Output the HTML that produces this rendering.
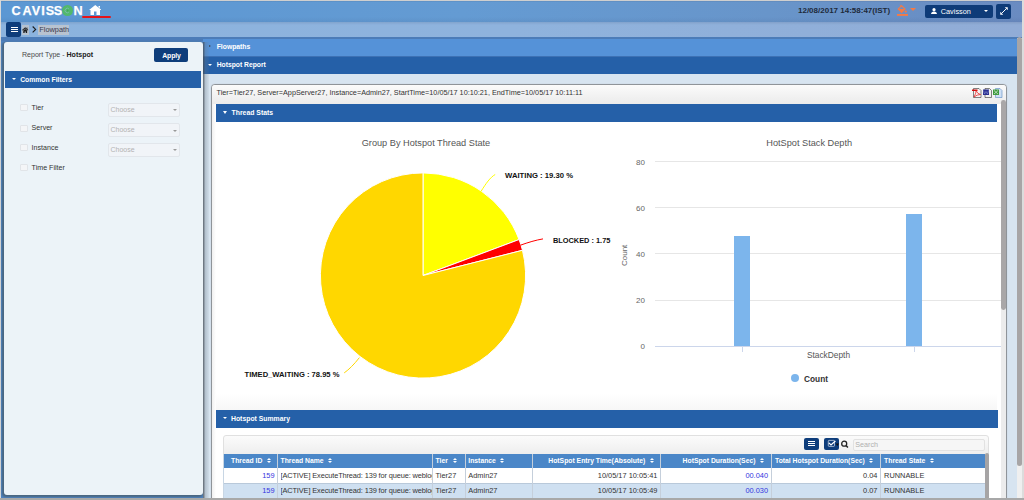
<!DOCTYPE html>
<html><head><meta charset="utf-8">
<style>
*{box-sizing:border-box;margin:0;padding:0}
html,body{width:1024px;height:500px;overflow:hidden;background:#4f84c2;font-family:"Liberation Sans",sans-serif}
.a{position:absolute}
.t{position:absolute;white-space:nowrap;line-height:10px;height:10px}
.w{color:#fff;font-weight:bold}
.cb{position:absolute;left:19.5px;width:8px;height:7px;background:#f4f5f7;border:1px solid #e1e4e8;border-radius:1px}
.lb{position:absolute;left:31.6px;font-size:7.1px;color:#333;white-space:nowrap;line-height:10px}
.dd{position:absolute;left:107.5px;width:72.5px;height:14px;background:#f1f4f8;border:1px solid #e2e6eb;border-radius:2px}
.dd span{position:absolute;left:2px;top:1.2px;font-size:7px;color:#b3b3b3;line-height:10px}
.dd i{position:absolute;left:64.5px;top:5.5px;width:0;height:0;border-left:2px solid transparent;border-right:2px solid transparent;border-top:2.5px solid #999}
.bar{position:absolute;background:#2560a8}
.th{position:absolute;top:453.6px;height:14.4px;line-height:14.4px;font-size:6.8px;font-weight:bold;color:#fff;white-space:nowrap}
.td{position:absolute;font-size:7.4px;color:#333;white-space:nowrap;line-height:15px;height:15px}
.sep{position:absolute;top:453.6px;width:1px;height:44px;background:#c5cfdb}
.srt{display:inline-block;vertical-align:middle;width:5.6px;height:6px;position:relative;margin-left:4.6px;top:0px}
.srt:before{content:"";position:absolute;left:0;top:0;border-left:2.8px solid transparent;border-right:2.8px solid transparent;border-bottom:2.7px solid #fff}
.srt:after{content:"";position:absolute;left:0;top:3.6px;border-left:2.8px solid transparent;border-right:2.8px solid transparent;border-top:2.7px solid #fff}
.tr{position:absolute;font-size:7.4px;color:#333;white-space:nowrap;line-height:15px;height:15px;text-align:right}
</style></head><body>
<!-- frame -->
<div class="a" style="left:0;top:0;width:1024px;height:1px;background:#cfcfcf"></div>
<div class="a" style="left:0;top:0;width:1px;height:500px;background:#d9d9d9"></div>
<!-- header -->
<div class="a" style="left:1px;top:1px;width:1023px;height:20.5px;background:linear-gradient(180deg,rgba(40,50,70,.12) 0,rgba(0,0,0,0) 1.5px,rgba(0,0,0,0) 75%,rgba(20,30,60,.06) 100%),linear-gradient(90deg,#5b97d3 0%,#649bd3 45%,#6895ca 75%,#6a8bc1 100%)"></div>
<!-- breadcrumb -->
<div class="a" style="left:1px;top:21.5px;width:1023px;height:15.5px;background:linear-gradient(180deg,rgba(30,50,90,.12) 0,rgba(0,0,0,0) 3px),linear-gradient(90deg,#8bb3de 0%,#8fb3dd 50%,#91acd6 100%)"></div>
<div class="a" style="left:1px;top:37px;width:1023px;height:4px;background:#4c7cb8"></div>

<!-- logo -->
<div class="a" style="left:0;top:3.6px;width:100px;height:14px;font-size:13.6px;font-weight:bold;color:#fff;line-height:14px;-webkit-text-stroke:0.25px #fff"><span style="position:absolute;left:10.2px;width:12px;text-align:center;transform:scaleX(0.93)">C</span><span style="position:absolute;left:20.6px;width:12px;text-align:center;transform:scaleX(0.93)">A</span><span style="position:absolute;left:29.9px;width:12px;text-align:center;transform:scaleX(0.93)">V</span><span style="position:absolute;left:37.1px;width:12px;text-align:center;transform:scaleX(0.93)">I</span><span style="position:absolute;left:43.9px;width:12px;text-align:center;transform:scaleX(0.93)">S</span><span style="position:absolute;left:51.9px;width:12px;text-align:center;transform:scaleX(0.93)">S</span><span style="position:absolute;left:72.2px;width:12px;text-align:center;transform:scaleX(0.93)">N</span></div><div class="a" style="left:62.2px;top:4.9px;width:10.8px;height:10.9px;border-radius:50%;background:#52b86c"></div><svg class="a" style="left:62.2px;top:4.9px" width="11" height="11" viewBox="0 0 22 22"><path d="M13.8 7.6 A4.6 4.6 0 1 0 13.8 14.4" stroke="#86bcc8" stroke-width="1.3" fill="none"/><path d="M10 8.6 L13.6 11 L10 13.4 Z" fill="#3fa85a"/></svg>
<svg class="a" style="left:88.5px;top:4.5px" width="12.5" height="10" viewBox="0 0 25 20"><path d="M12.5 0 L25 10 L22 10 L22 20 L15 20 L15 13 L10 13 L10 20 L3 20 L3 10 L0 10 Z M19 2 L22 2 L22 6 L19 4 Z" fill="#fff"/></svg>
<div class="a" style="left:82px;top:16px;width:29px;height:1.6px;background:#e4141b;border-radius:1px"></div>

<!-- header right -->
<div class="t" style="left:798px;top:6px;font-size:8px;font-weight:bold;color:#1e2a3a">12/08/2017 14:58:47(IST)</div>
<svg class="a" style="left:894px;top:2px" width="26" height="18" viewBox="0 0 26 18">
 <path d="M7.6 3.7 L11 7.1 L7.6 10.5 L4.2 7.1 Z" fill="none" stroke="#f47a45" stroke-width="1.1"/>
 <path d="M4.2 7.1 L11 7.1 L7.6 10.5 Z" fill="#f47a45"/>
 <path d="M6.3 2.9 L8 4.8" stroke="#f47a45" stroke-width="1"/>
 <circle cx="11.8" cy="9.6" r="1.1" fill="#f47a45"/>
 <rect x="3" y="12" width="11" height="1.9" fill="#f47a45"/>
 <path d="M16 6 L22 6 L19 8.9 Z" fill="#f47a45"/>
</svg>
<div class="a" style="left:925px;top:5px;width:68px;height:12.8px;background:#0e3b78;border-radius:2px"></div>
<svg class="a" style="left:930.5px;top:7.8px" width="6" height="6.5" viewBox="0 0 12 13"><circle cx="6" cy="3.3" r="3.2" fill="#fff"/><path d="M0 13 Q0 7 6 7 Q12 7 12 13 Z" fill="#fff"/></svg>
<div class="t" style="left:940.8px;top:6.5px;font-size:7.3px;color:#fff">Cavisson</div>
<div class="a" style="left:983.7px;top:10.2px;border-left:2.6px solid transparent;border-right:2.6px solid transparent;border-top:2.6px solid #fff"></div>
<div class="a" style="left:995.5px;top:4px;width:15.5px;height:14.5px;background:#0e3b78;border-radius:2px"></div>
<svg class="a" style="left:999.6px;top:7px" width="8" height="8" viewBox="0 0 16 16"><path d="M9.5 0.5 L15.5 0.5 L15.5 6.5 Z M0.5 9.5 L0.5 15.5 L6.5 15.5 Z" fill="#fff"/><path d="M13 3 L3 13" stroke="#fff" stroke-width="2"/></svg>

<!-- breadcrumb content -->
<div class="a" style="left:6.2px;top:21.9px;width:15px;height:14.9px;background:#0e3d7b;border-radius:2px"></div>
<div class="a" style="left:10.5px;top:26.6px;width:7px;height:1.2px;background:#fff"></div>
<div class="a" style="left:10.5px;top:28.8px;width:7px;height:1.2px;background:#fff"></div>
<div class="a" style="left:10.5px;top:31px;width:7px;height:1.2px;background:#fff"></div>
<div class="a" style="left:22px;top:25px;width:7px;height:9.5px;background:#b6c2cf"></div>
<svg class="a" style="left:22.4px;top:26.6px" width="6.4" height="6.2" viewBox="0 0 13 12.4"><path d="M6.5 0.3 L13 6 L11.6 7.2 L6.5 2.8 L1.4 7.2 L0 6 Z M2.6 7.2 L6.5 3.9 L10.4 7.2 L10.4 12.4 L7.6 12.4 L7.6 9 L5.4 9 L5.4 12.4 L2.6 12.4 Z M9.4 1 L11 1 L11 3.8 L9.4 2.4 Z" fill="#1f1f1f"/></svg>
<svg class="a" style="left:32px;top:26.2px" width="4.5" height="6.8" viewBox="0 0 9 14"><path d="M1.2 1 L7.4 7 L1.2 13" stroke="#1a1a1a" stroke-width="2.3" fill="none"/></svg>
<div class="a" style="left:38.3px;top:25px;width:30.5px;height:9.6px;background:#b8c3d0"></div>
<div class="t" style="left:39.3px;top:25.1px;font-size:7.35px;color:#3b3a4e">Flowpath</div>

<!-- sidebar panel -->
<div class="a" style="left:4px;top:41.5px;width:199px;height:453.5px;background:#ecf3f8;border-radius:3px;box-shadow:-1px 1px 2px 1px #4a6680"></div>
<div class="t" style="left:22px;top:49.9px;font-size:7.05px;color:#4a4a4a">Report Type - <b style="color:#222">Hotspot</b></div>
<div class="a" style="left:154.2px;top:48.2px;width:34px;height:13.4px;background:#0e3d7b;border-radius:2px"></div>
<div class="t w" style="left:162.2px;top:50.5px;font-size:6.9px;letter-spacing:-0.1px">Apply</div>
<div class="bar" style="left:4.8px;top:71px;width:196.4px;height:16.8px"></div>
<div class="a" style="left:12px;top:78.2px;border-left:2.2px solid transparent;border-right:2.2px solid transparent;border-top:2.3px solid #fff"></div>
<div class="t w" style="left:20.2px;top:74.5px;font-size:6.8px">Common Filters</div>

<div class="cb" style="top:104.3px"></div><div class="lb" style="top:103px">Tier</div>
<div class="cb" style="top:124.6px"></div><div class="lb" style="top:123.3px">Server</div>
<div class="cb" style="top:143.8px"></div><div class="lb" style="top:142.5px">Instance</div>
<div class="cb" style="top:164px"></div><div class="lb" style="top:163px">Time Filter</div>
<div class="dd" style="top:102.7px"><span>Choose</span><i></i></div>
<div class="dd" style="top:123px"><span>Choose</span><i></i></div>
<div class="dd" style="top:142.6px"><span>Choose</span><i></i></div>

<!-- right area bars -->
<div class="a" style="left:203px;top:38.5px;width:814px;height:17.2px;background:#5592d8"></div>
<div class="a" style="left:203px;top:55.5px;width:814px;height:1.1px;background:#3d71b4"></div>
<div class="a" style="left:208.6px;top:44.6px;border-top:1.6px solid transparent;border-bottom:1.6px solid transparent;border-left:2.4px solid #3f4650"></div>
<div class="t w" style="left:216.7px;top:42.4px;font-size:6.8px">Flowpaths</div>
<div class="bar" style="left:203px;top:56.6px;width:814px;height:17.1px"></div>
<div class="a" style="left:207.9px;top:63.7px;border-left:2.4px solid transparent;border-right:2.4px solid transparent;border-top:2.9px solid #fff"></div>
<div class="t w" style="left:216.7px;top:60.3px;font-size:6.75px">Hotspot Report</div>
<div class="a" style="left:203px;top:73.7px;width:814px;height:426.3px;background:#d7e4f0"></div>
<div class="a" style="left:202.6px;top:41.5px;width:6px;height:456px;background:linear-gradient(90deg,rgba(70,78,88,.85) 0,rgba(100,115,130,.3) 40%,rgba(120,135,150,.08) 100%)"></div>
<!-- outer scrollbar -->
<div class="a" style="left:1017px;top:37.7px;width:5px;height:462.3px;background:#efefef"></div><div class="a" style="left:1022.4px;top:0;width:1.6px;height:500px;background:#dcdcdc"></div>
<div class="a" style="left:1017px;top:37.2px;width:5.2px;height:428.6px;background:#a7a5a6;border-radius:2.6px"></div>

<!-- report panel -->
<div class="a" style="left:211px;top:84px;width:795.5px;height:420px;background:#fff;border:1px solid #8f9499;border-radius:4px;box-shadow:0 0 1px #b0b8c0"></div>
<div class="a" style="left:212px;top:85px;width:793.5px;height:19px;background:linear-gradient(#fbfbfb,#ebebeb);border-radius:3px 3px 0 0"></div><div class="a" style="left:212px;top:104px;width:4px;height:400px;background:linear-gradient(90deg,#f0f0f0,#fff)"></div>
<div class="t" style="left:216.5px;top:87.7px;font-size:7.27px;color:#333">Tier=Tier27, Server=AppServer27, Instance=Admin27, StartTime=10/05/17 10:10:21, EndTime=10/05/17 10:11:11</div>
<!-- export icons -->
<svg class="a" style="left:972px;top:88px" width="31" height="10" viewBox="0 0 62 20">
 <path d="M3 1 L14 1 L18 5 L18 19 L3 19 Z" fill="#f4f4f4" stroke="#333" stroke-width="1.2"/>
 <rect x="0" y="3" width="11" height="3" fill="#d01010"/>
 <path d="M4 18 Q9 9 8 5 Q11 12 17 13 Q10 13 4 18" stroke="#e82020" stroke-width="1.5" fill="none"/>
 <path d="M26 1 L35 1 L39 5 L39 19 L26 19 Z" fill="#f0f0f0" stroke="#333" stroke-width="1.2"/>
 <rect x="22" y="3" width="12" height="11" fill="#2a2f8f"/>
 <path d="M23 5 L25 12 L28 7 L31 12 L33 5" stroke="#9aa6e0" stroke-width="1" fill="none"/>
 <path d="M47 1 L56 1 L60 5 L60 19 L47 19 Z" fill="#cfe0f4" stroke="#5b8ac4" stroke-width="1.2"/>
 <rect x="42" y="3" width="12" height="11" fill="#3f9a3f"/>
 <path d="M44 5 L52 12 M52 5 L44 12" stroke="#d8f0d8" stroke-width="1.4"/>
</svg>
<!-- inner scrollbar -->
<div class="a" style="left:1000.8px;top:99.5px;width:4.8px;height:400px;background:#ececec"></div>
<div class="a" style="left:1000.8px;top:99.5px;width:4.8px;height:210px;background:#a9a7a8;border-radius:2.4px"></div>

<!-- thread stats bar -->
<div class="bar" style="left:216px;top:104px;width:781px;height:17.5px"></div>
<div class="a" style="left:222.6px;top:110.8px;border-left:2.5px solid transparent;border-right:2.5px solid transparent;border-top:3.1px solid #fff"></div>
<div class="t w" style="left:231.6px;top:108px;font-size:6.85px">Thread Stats</div>
<!-- chart area gradient bottom -->
<div class="a" style="left:216px;top:394px;width:781px;height:16px;background:linear-gradient(#fff,#f7f7f7)"></div>

<!-- PIE -->
<div class="t" style="left:361.7px;top:138px;font-size:9.2px;color:#555;line-height:11px;height:11px">Group By Hotspot Thread State</div>
<svg class="a" style="left:216px;top:121.5px" width="400" height="272" viewBox="216 121.5 400 272">
 <g stroke="#fff" stroke-width="1" stroke-linejoin="round">
  <path d="M423 275 L423.00 172.40 A102.6 102.6 0 0 1 519.09 239.04 Z" fill="#ffff00"/>
  <path d="M423 275 L519.09 239.04 A102.6 102.6 0 0 1 522.46 249.80 Z" fill="#ff0000"/>
  <path d="M423 275 L522.46 249.80 A102.6 102.6 0 1 1 423.00 172.40 Z" fill="#ffd700"/>
 </g>
 <path d="M481.2 190.6 C486 183 490 177 495.2 174" stroke="#ffff00" stroke-width="1" fill="none"/>
 <path d="M520.4 244.7 C528 242 536 239.5 543 238.4" stroke="#ff0000" stroke-width="1" fill="none"/>
 <path d="M359.4 357.1 C354 364 349 369 344.2 372.4" stroke="#ffd700" stroke-width="1" fill="none"/>
</svg>
<div class="t" style="left:505.1px;top:171px;font-size:7.7px;font-weight:bold;color:#111">WAITING : 19.30 %</div>
<div class="t" style="left:552.9px;top:236px;font-size:7.4px;font-weight:bold;color:#111">BLOCKED : 1.75</div>
<div class="t" style="left:244.5px;top:370px;font-size:7.6px;font-weight:bold;color:#111">TIMED_WAITING : 78.95 %</div>

<!-- BAR CHART -->
<div class="t" style="left:766.3px;top:138px;font-size:9.2px;color:#555;line-height:11px;height:11px">HotSpot Stack Depth</div>
<div class="a" style="left:655px;top:161.2px;width:346px;height:1px;background:#e6e6e6"></div>
<div class="a" style="left:655px;top:207.3px;width:346px;height:1px;background:#e6e6e6"></div>
<div class="a" style="left:655px;top:253.4px;width:346px;height:1px;background:#e6e6e6"></div>
<div class="a" style="left:655px;top:299.5px;width:346px;height:1px;background:#e6e6e6"></div>
<div class="a" style="left:655px;top:345.6px;width:346px;height:1px;background:#ccd6eb"></div>
<div class="t" style="right:379px;top:157.8px;font-size:8px;color:#666;text-align:right">80</div>
<div class="t" style="right:379px;top:203.9px;font-size:8px;color:#666;text-align:right">60</div>
<div class="t" style="right:379px;top:250px;font-size:8px;color:#666;text-align:right">40</div>
<div class="t" style="right:379px;top:296.1px;font-size:8px;color:#666;text-align:right">20</div>
<div class="t" style="right:379px;top:341.7px;font-size:8px;color:#666;text-align:right">0</div>
<div class="t" style="left:619.5px;top:258px;font-size:8px;color:#666;transform:rotate(-90deg);transform-origin:0 0;top:266px">Count</div>
<div class="a" style="left:734.2px;top:236px;width:15.8px;height:110px;background:#7cb5ec"></div>
<div class="a" style="left:906.1px;top:213.6px;width:16px;height:132.4px;background:#7cb5ec"></div>
<div class="a" style="left:742px;top:346.6px;width:1px;height:5.5px;background:#ccd6eb"></div>
<div class="a" style="left:914px;top:346.6px;width:1px;height:5.5px;background:#ccd6eb"></div>
<div class="t" style="left:806.9px;top:350px;font-size:8.35px;color:#555">StackDepth</div>
<div class="a" style="left:791.2px;top:374px;width:8px;height:8px;border-radius:50%;background:#7cb5ec"></div>
<div class="t" style="left:804px;top:374px;font-size:8.3px;font-weight:bold;color:#333">Count</div>

<!-- hotspot summary -->
<div class="bar" style="left:216px;top:410px;width:781.6px;height:18px"></div>
<div class="a" style="left:222.8px;top:417.2px;border-left:2.4px solid transparent;border-right:2.4px solid transparent;border-top:2.9px solid #fff"></div>
<div class="t w" style="left:231px;top:414px;font-size:6.85px">Hotspot Summary</div>

<!-- table toolbar -->
<div class="a" style="left:223px;top:435px;width:766px;height:20px;background:linear-gradient(#fbfbfb,#eeeeee);border:1px solid #e0e0e0;border-radius:3px 3px 0 0"></div>
<div class="a" style="left:804.1px;top:437.9px;width:14.6px;height:12.3px;background:#0e3d7b;border-radius:2px"></div>
<div class="a" style="left:808px;top:441px;width:7px;height:1.1px;background:#fff;box-shadow:0 2px 0 #fff,0 4px 0 #fff"></div>
<div class="a" style="left:823.9px;top:437.9px;width:15.1px;height:12.3px;background:#0e3d7b;border-radius:2px"></div>
<svg class="a" style="left:826px;top:439px" width="14" height="9" viewBox="0 0 14 9"><rect x="2.3" y="1.4" width="6.2" height="6" rx="0.8" fill="none" stroke="rgba(230,235,245,.75)" stroke-width="0.9"/><path d="M2.9 3.9 L5 5.9 L9.4 2" stroke="#fff" stroke-width="1.3" fill="none"/><path d="M9.6 4.6 L13 4.6 L11.3 6.9 Z" fill="#111"/></svg>
<svg class="a" style="left:840px;top:439px" width="10" height="10" viewBox="0 0 10 10"><circle cx="4.2" cy="4.7" r="2.5" stroke="#222" stroke-width="1.3" fill="none"/><path d="M6 6.6 L7.9 8.6" stroke="#222" stroke-width="1.5"/></svg>
<div class="a" style="left:853.2px;top:438.6px;width:131.4px;height:12.2px;background:#f6f6f6;border:1px solid #e2e2e2;border-radius:2px"></div>
<div class="t" style="left:855.3px;top:439.7px;font-size:7.2px;color:#b0b0b0">Search</div>

<!-- table -->
<div class="a" style="left:223px;top:453.7px;width:761.6px;height:14.2px;background:#4b87c8"></div>
<div class="a" style="left:223px;top:467.9px;width:761.6px;height:15.3px;background:#fff"></div>
<div class="a" style="left:223px;top:483.2px;width:761.6px;height:16px;background:#cfe0f1"></div>
<div class="a" style="left:223px;top:482.9px;width:761.6px;height:0.7px;background:#b9c9da"></div>
<div class="a" style="left:223px;top:453.7px;width:0.7px;height:46px;background:#c8d6e4"></div>
<div class="sep" style="left:277px"></div>
<div class="sep" style="left:432px"></div>
<div class="sep" style="left:464.6px"></div>
<div class="sep" style="left:532px"></div>
<div class="sep" style="left:660.3px"></div>
<div class="sep" style="left:770.7px"></div>
<div class="sep" style="left:879.8px"></div>

<div class="th" style="left:231px">Thread ID<i class="srt"></i></div>
<div class="th" style="left:280.5px">Thread Name<i class="srt"></i></div>
<div class="th" style="left:435.6px">Tier<i class="srt"></i></div>
<div class="th" style="left:468.3px">Instance<i class="srt"></i></div>
<div class="th" style="left:548.3px">HotSpot Entry Time(Absolute)<i class="srt"></i></div>
<div class="th" style="left:682.6px">HotSpot Duration(Sec)<i class="srt"></i></div>
<div class="th" style="left:775px">Total Hotspot Duration(Sec)<i class="srt"></i></div>
<div class="th" style="left:884.1px">Thread State<i class="srt"></i></div>

<div class="tr" style="right:749.5px;top:468px;color:#3535e0">159</div>
<div class="td" style="left:280.5px;top:468px;width:151px;overflow:hidden;letter-spacing:-0.12px">[ACTIVE] ExecuteThread: 139 for queue: weblogic</div>
<div class="td" style="left:435.6px;top:468px">Tier27</div>
<div class="td" style="left:468.3px;top:468px">Admin27</div>
<div class="tr" style="right:366.6px;top:468px;">10/05/17 10:05:41</div>
<div class="tr" style="right:256.0px;top:468px;color:#3535e0">00.040</div>
<div class="tr" style="right:146.6px;top:468px;">0.04</div>
<div class="td" style="left:884.1px;top:468px">RUNNABLE</div>

<div class="tr" style="right:749.5px;top:483.2px;color:#3535e0">159</div>
<div class="td" style="left:280.5px;top:483.2px;width:151px;overflow:hidden;letter-spacing:-0.12px">[ACTIVE] ExecuteThread: 139 for queue: weblogic</div>
<div class="td" style="left:435.6px;top:483.2px">Tier27</div>
<div class="td" style="left:468.3px;top:483.2px">Admin27</div>
<div class="tr" style="right:366.6px;top:483.2px;">10/05/17 10:05:49</div>
<div class="tr" style="right:256.0px;top:483.2px;color:#3535e0">00.030</div>
<div class="tr" style="right:146.6px;top:483.2px;">0.07</div>
<div class="td" style="left:884.1px;top:483.2px">RUNNABLE</div>
<!-- table scrollbar -->
<div class="a" style="left:984.6px;top:453px;width:4.4px;height:50px;background:#a6a4a5;border-radius:2.2px"></div>

<!-- bottom frame -->
<div class="a" style="left:0;top:497.8px;width:1024px;height:0.6px;background:#d8d8d8"></div><div class="a" style="left:0;top:498.3px;width:1024px;height:1.7px;background:#a8a8a8"></div>


</body></html>
